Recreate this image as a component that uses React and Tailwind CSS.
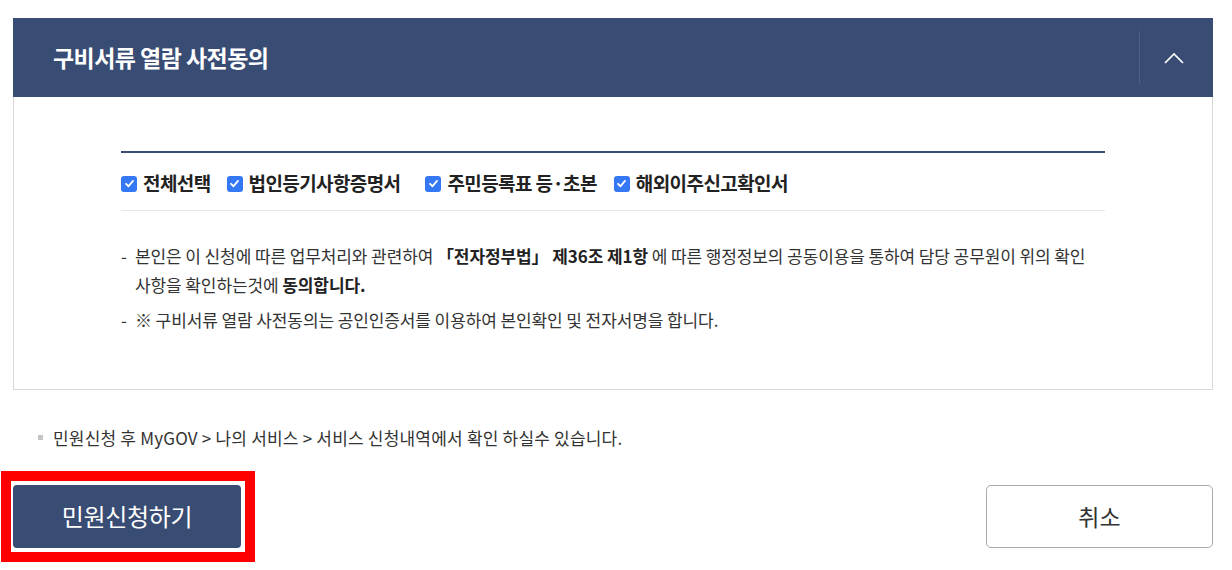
import React from "react";

const Check = () => (
  <span className="flex h-[16px] w-[16px] shrink-0 items-center justify-center rounded-[3px] bg-[#3478f6]">
    <svg width="11" height="11" viewBox="0 0 12 12" fill="none">
      <path d="M2.2 6.3 L4.9 9 L9.8 3.2" stroke="white" strokeWidth="2" strokeLinecap="round" strokeLinejoin="round" />
    </svg>
  </span>
);

const Item = ({ label, className = "" }) => (
  <label className={`flex items-center gap-[6px] ${className}`}>
    <Check />
    <span className="text-[19px] font-bold tracking-[-0.6px] text-[#222]">{label}</span>
  </label>
);

export default function App() {
  return (
    <div
      className="w-[1232px] h-[570px] bg-white overflow-hidden"
      style={{ fontFamily: '"Noto Sans CJK KR", "Noto Sans", sans-serif' }}
    >
      <div className="pt-[18px] pl-[13px] w-[1213px]">
        {/* Panel */}
        <div className="w-[1200px]">
          <div className="flex h-[79px] items-center bg-[#394c74]">
            <h2 className="flex-1 pl-[40px] text-[23px] font-bold tracking-[-0.55px] text-white">
              구비서류 열람 사전동의
            </h2>
            <div className="h-[53px] w-px bg-[#4d5f86]" />
            <button className="flex h-full w-[73px] items-center justify-center pr-[5px]">
              <svg width="20" height="12" viewBox="0 0 20 12" fill="none">
                <path d="M1 11 L10 2 L19 11" stroke="white" strokeWidth="1.7" />
              </svg>
            </button>
          </div>
          <div className="border-x border-b border-[#d9d9d9] px-[107px] pt-[54px] pb-[55px]">
            <div className="border-t-2 border-[#394c74]" />
            <div className="flex h-[58px] items-center border-b border-[#e6e6e6] pt-[4px]">
              <Item label="전체선택" className="mr-[16px]" />
              <Item label="법인등기사항증명서" className="mr-[25px]" />
              <Item label="주민등록표 등·초본" className="mr-[17px]" />
              <Item label="해외이주신고확인서" />
            </div>
            <div className="pt-[30px] text-[17px] leading-[29px] tracking-[-0.1px] text-[#333]">
              <p className="flex">
                <span className="w-[14px] shrink-0">-</span>
                <span>
                  본인은 이 신청에 따른 업무처리와 관련하여 <b className="text-[#222]">「전자정부법」 제36조 제1항</b> 에 따른
                  행정정보의 공동이용을 통하여 담당 공무원이 위의 확인
                  <br />
                  사항을 확인하는것에 <b className="text-[#222]">동의합니다.</b>
                </span>
              </p>
              <p className="mt-[6px] flex">
                <span className="w-[14px] shrink-0">-</span>
                <span>※ 구비서류 열람 사전동의는 공인인증서를 이용하여 본인확인 및 전자서명을 합니다.</span>
              </p>
            </div>
          </div>
        </div>

        {/* note */}
        <div className="mt-[35px] flex items-center pl-[25px] text-[17px] tracking-[0.2px] text-[#333]">
          <span className="mr-[10px] h-[5px] w-[5px] bg-[#c4c4c4]" />
          <span>민원신청 후 MyGOV &gt; 나의 서비스 &gt; 서비스 신청내역에서 확인 하실수 있습니다.</span>
        </div>
      </div>

      {/* buttons */}
      <div className="mt-[20px] ml-[1px] flex w-[1212px] items-center justify-between">
        <div className="border-[10px] border-[#ff0000] py-[4px] pl-[2px] pr-[4px]">
          <button className="flex h-[63px] w-[228px] items-center justify-center rounded-[4px] bg-[#394c74] text-[24px] tracking-[-0.3px] text-white">
            민원신청하기
          </button>
        </div>
        <button className="flex h-[63px] w-[227px] items-center justify-center rounded-[5px] border border-[#aaaaaa] bg-white text-[23px] text-[#333]">
          취소
        </button>
      </div>
    </div>
  );
}
